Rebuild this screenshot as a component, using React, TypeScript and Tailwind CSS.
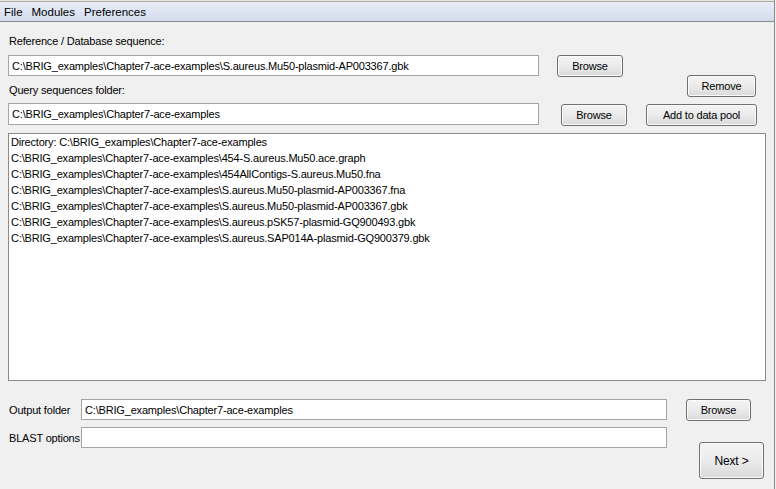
import React from "react";

const files = [
  "Directory: C:\\BRIG_examples\\Chapter7-ace-examples",
  "C:\\BRIG_examples\\Chapter7-ace-examples\\454-S.aureus.Mu50.ace.graph",
  "C:\\BRIG_examples\\Chapter7-ace-examples\\454AllContigs-S.aureus.Mu50.fna",
  "C:\\BRIG_examples\\Chapter7-ace-examples\\S.aureus.Mu50-plasmid-AP003367.fna",
  "C:\\BRIG_examples\\Chapter7-ace-examples\\S.aureus.Mu50-plasmid-AP003367.gbk",
  "C:\\BRIG_examples\\Chapter7-ace-examples\\S.aureus.pSK57-plasmid-GQ900493.gbk",
  "C:\\BRIG_examples\\Chapter7-ace-examples\\S.aureus.SAP014A-plasmid-GQ900379.gbk",
];

const Btn = ({ children, className = "" }: { children: React.ReactNode; className?: string }) => (
  <button
    className={`flex items-center justify-center shrink-0 rounded-[3px] border border-[#707070] bg-gradient-to-b from-[#f4f4f4] via-[#ebebeb] to-[#d9d9d9] text-black shadow-[inset_0_0_0_1px_#fbfbfb] ${className}`}
  >
    {children}
  </button>
);

const Field = ({ value, className = "" }: { value?: string; className?: string }) => (
  <div className={`flex items-center shrink-0 whitespace-nowrap border border-[#a5a5a5] bg-white pl-[3px] ${className}`}>
    {value}
  </div>
);

export default function App() {
  return (
    <div
      className="w-[776px] h-[489px] overflow-hidden bg-[#f0f0f0] text-[11px] leading-[16px] tracking-[-0.18px] text-black"
      style={{ fontFamily: '"Liberation Sans", Arial, sans-serif' }}
    >
      <div className="w-[775px] h-full border-r border-[#8a8a8a] flex flex-col">
        {/* Menu bar */}
        <div className="h-[1px] bg-[#e9e6da]" />
        <div className="h-[21px] border-t border-b border-t-[#a8a8a8] border-b-[#8c8c8c] bg-gradient-to-b from-[#e9edf7] to-[#d3dbee] flex items-center gap-[9px] pl-[4px] text-[11.5px] tracking-normal">
          <span>File</span>
          <span>Modules</span>
          <span>Preferences</span>
        </div>

        {/* Reference */}
        <div className="mt-[11px] ml-[9px] h-[16px]">Reference / Database sequence:</div>
        <div className="mt-[6px] ml-[8px] h-[20px] flex items-start">
          <Field className="w-[531px] h-[21px]" value="C:\BRIG_examples\Chapter7-ace-examples\S.aureus.Mu50-plasmid-AP003367.gbk" />
          <Btn className="ml-[18px] w-[66px] h-[22px]">Browse</Btn>
        </div>

        {/* Query label + Remove */}
        <div className="h-[22px] flex items-end justify-between pl-[9px] pr-[18px]">
          <span className="mb-[-1px]">Query sequences folder:</span>
          <Btn className="w-[69px] h-[22px]">Remove</Btn>
        </div>
        <div className="mt-[6px] ml-[8px] h-[22px] flex items-start">
          <Field className="w-[531px] h-[22px]" value="C:\BRIG_examples\Chapter7-ace-examples" />
          <Btn className="ml-[22px] mt-[1px] w-[66px] h-[22px]">Browse</Btn>
          <Btn className="ml-[19px] mt-[1px] w-[111px] h-[22px]">Add to data pool</Btn>
        </div>

        {/* List */}
        <div className="mt-[8px] ml-[8px] w-[758px] h-[248px] shrink-0 border border-[#8a8a8a] bg-white pl-[2px]">
          {files.map((f) => (
            <div key={f} className="h-[16px] flex items-center whitespace-nowrap">
              {f}
            </div>
          ))}
        </div>

        {/* Output */}
        <div className="mt-[18px] ml-[9px] h-[21px] flex items-center">
          <span className="w-[72px] whitespace-nowrap">Output folder</span>
          <Field className="w-[586px] h-[21px]" value="C:\BRIG_examples\Chapter7-ace-examples" />
          <Btn className="ml-[19px] w-[65px] h-[22px]">Browse</Btn>
        </div>
        <div className="mt-[7px] ml-[9px] flex items-start">
          <span className="w-[72px] h-[21px] flex items-center whitespace-nowrap">BLAST options</span>
          <Field className="w-[586px] h-[21px]" />
          <Btn className="ml-[32px] mt-[15px] w-[65px] h-[37px] text-[12px]">Next &gt;</Btn>
        </div>
      </div>
    </div>
  );
}
